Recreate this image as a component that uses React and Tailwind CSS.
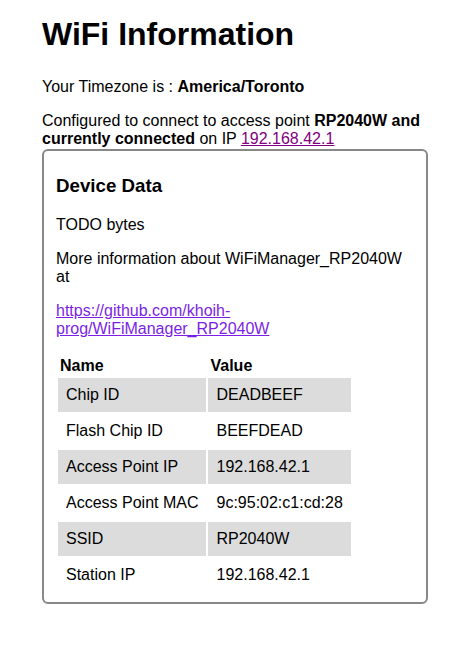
export default function App() {
  const rows = [
    ["Chip ID", "DEADBEEF"],
    ["Flash Chip ID", "BEEFDEAD"],
    ["Access Point IP", "192.168.42.1"],
    ["Access Point MAC", "9c:95:02:c1:cd:28"],
    ["SSID", "RP2040W"],
    ["Station IP", "192.168.42.1"],
  ];
  return (
    <div className="min-h-[645px] bg-white text-black" style={{ fontFamily: '"Liberation Sans", Arial, sans-serif' }}>
      <div className="ml-[42px] w-[386px] pt-[16px] text-[16px] leading-[18px]">
        <h1 className="text-[32px] font-bold leading-[37px]">WiFi Information</h1>
        <p className="mt-[25px]">
          Your Timezone is : <b>America/Toronto</b>
        </p>
        <p className="mt-[16px]">
          Configured to connect to access point <b>RP2040W and currently connected</b> on IP{" "}
          <a href="#" className="text-[#800080] underline">192.168.42.1</a>
        </p>
        <div className="mt-[1px] rounded-[6px] border-2 border-[#888888] px-[12px] pt-[6px] pb-[8px]">
          <h3 className="mt-[18px] text-[18.72px] font-bold leading-[21.5px]">Device Data</h3>
          <p className="mt-[19px]">TODO bytes</p>
          <p className="mt-[16px]">More information about WiFiManager_RP2040W at</p>
          <p className="mt-[16px]">
            <a href="#" className="text-[#7b1fe6] underline">https://github.com/khoih-prog/WiFiManager_RP2040W</a>
          </p>
          <table className="mt-[14px] border-separate border-spacing-[2px]">
            <thead>
              <tr>
                <th className="px-[2px] pt-[3px] pb-[1px] text-left font-bold">Name</th>
                <th className="px-[2px] pt-[3px] pb-[1px] text-left font-bold">Value</th>
              </tr>
            </thead>
            <tbody>
              {rows.map(([k, v], i) => (
                <tr key={k}>
                  <td className={"p-[8px] " + (i % 2 === 0 ? "bg-[#dcdcdc]" : "")}>{k}</td>
                  <td className={"p-[8px] " + (i % 2 === 0 ? "bg-[#dcdcdc]" : "")}>{v}</td>
                </tr>
              ))}
            </tbody>
          </table>
        </div>
      </div>
    </div>
  );
}
